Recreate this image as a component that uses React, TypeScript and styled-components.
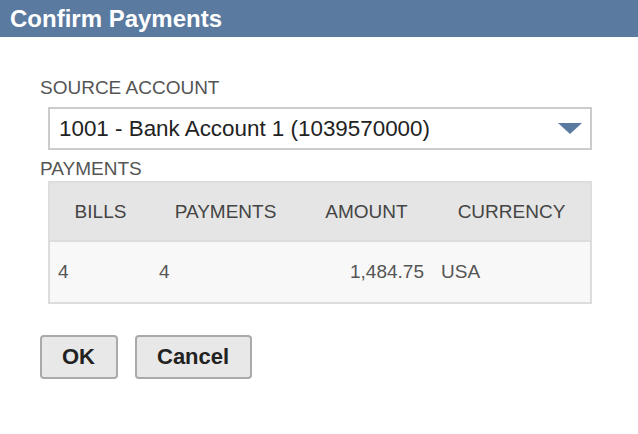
import React from "react";
import styled, { createGlobalStyle } from "styled-components";

const GlobalStyle = createGlobalStyle`
  html, body {
    margin: 0;
    padding: 0;
    background: #ffffff;
    font-family: "Liberation Sans", Arial, sans-serif;
  }
`;

const Dialog = styled.div`
  width: 638px;
  height: 434px;
  background: #ffffff;
`;

const TitleBar = styled.div`
  height: 37px;
  background-color: #5a7aa0;
  color: #ffffff;
  font-weight: 700;
  font-size: 24px;
  line-height: 37px;
  padding-left: 10px;
`;

const Body = styled.div`
  padding: 40px 46px 0 40px;
`;

const Label = styled.div`
  font-size: 19px;
  line-height: 21px;
  color: #555555;
`;

const Select = styled.div`
  margin: 9px 0 8px 8px;
  height: 39px;
  border: 2px solid #cccccc;
  display: flex;
  align-items: center;
  justify-content: space-between;
  padding: 0 8px 0 9px;
  font-size: 22.4px;
  color: #222222;
`;

const Table = styled.table`
  margin: 2px 0 0 8px;
  width: 544px;
  border-collapse: collapse;
  border: 2px solid #dddddd;
  font-size: 19px;
  color: #444444;
`;

const HeadCell = styled.th<{ $w: number }>`
  width: ${({ $w }) => $w}px;
  height: 57px;
  background: #e5e5e5;
  font-weight: 400;
  text-align: center;
  padding: 0;
  border-bottom: 2px solid #dddddd;
`;

const Cell = styled.td<{ $right?: boolean }>`
  height: 60px;
  background: #f8f8f8;
  text-align: ${({ $right }) => ($right ? "right" : "left")};
  padding: 0 ${({ $right }) => ($right ? "9px" : "0")} 0 ${({ $right }) => ($right ? "0" : "8px")};
  color: #555555;
`;

const Buttons = styled.div`
  display: flex;
  gap: 17px;
  margin-top: 31px;
`;

const Button = styled.button`
  height: 44px;
  padding: 0 21px 0 20px;
  background: #e8e8e8;
  border: 2px solid #aaaaaa;
  border-radius: 4px;
  font-family: "Liberation Sans", Arial, sans-serif;
  font-weight: 700;
  font-size: 22px;
  color: #222222;
`;

const columns = [
  { title: "BILLS", width: 102 },
  { title: "PAYMENTS", width: 150 },
  { title: "AMOUNT", width: 134 },
  { title: "CURRENCY", width: 158 },
];

const App = () => {
  return (
    <Dialog>
      <GlobalStyle />
      <TitleBar>Confirm Payments</TitleBar>
      <Body>
        <Label>SOURCE ACCOUNT</Label>
        <Select>
          <span>1001 - Bank Account 1 (1039570000)</span>
          <svg width="24" height="12" viewBox="0 0 24 12">
            <polygon points="0,0 24,0 12,11" fill="#5a7aa0" />
          </svg>
        </Select>
        <Label>PAYMENTS</Label>
        <Table>
          <thead>
            <tr>
              {columns.map((c) => (
                <HeadCell key={c.title} $w={c.width}>
                  {c.title}
                </HeadCell>
              ))}
            </tr>
          </thead>
          <tbody>
            <tr>
              <Cell>4</Cell>
              <Cell>4</Cell>
              <Cell $right>1,484.75</Cell>
              <Cell>USA</Cell>
            </tr>
          </tbody>
        </Table>
        <Buttons>
          <Button>OK</Button>
          <Button>Cancel</Button>
        </Buttons>
      </Body>
    </Dialog>
  );
};

export default App;
